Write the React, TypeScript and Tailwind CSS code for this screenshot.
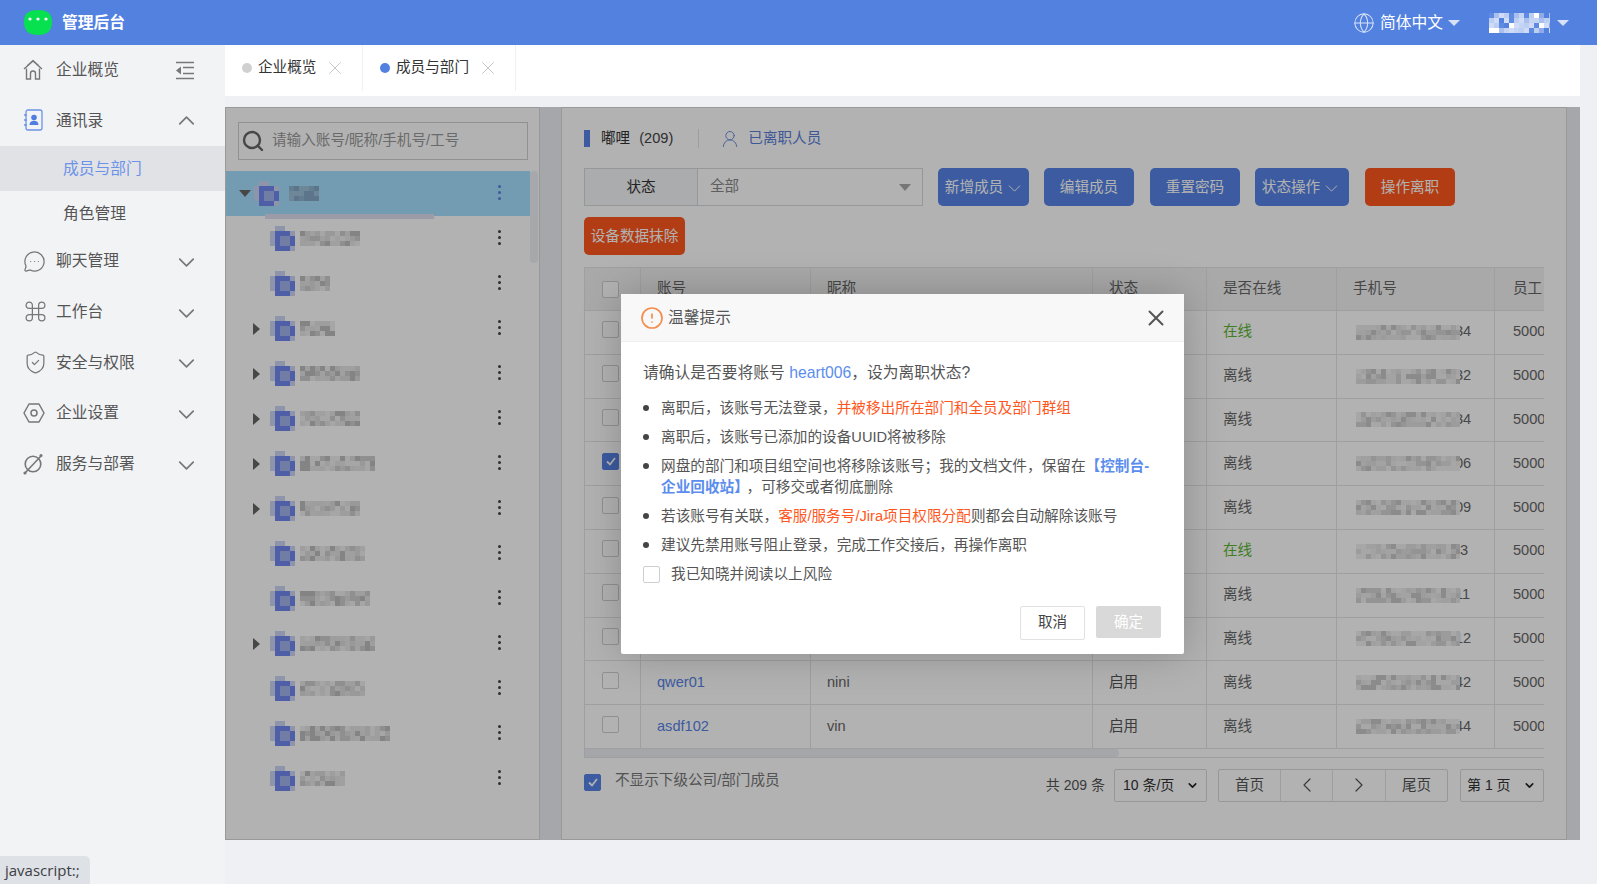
import { ChevronDown, ChevronUp, ChevronLeft, ChevronRight, CircleAlert, Command, Globe, MessageCircleMore, Search, ShieldCheck, UserRound, X } from 'lucide-react'

function rng(seed: number) {
  let s = seed * 9301 + 49297
  return () => {
    s = (s * 9301 + 49297) % 233280
    return s / 233280
  }
}

const grays = ['#e6e6e6', '#dcdcdc', '#cdcdcd', '#e2e2e2', '#eeeeee', '#bdbdbd']
const phoneGrays = ['#eaeaea', '#e0e0e0', '#d4d4d4', '#e6e6e6', '#f0f0f0', '#c8c8c8']
const lights = ['#a9c0ef', '#d0dcf7', '#ffffff', '#bccff3', '#5f8be2', '#5281e0', '#8faae8', '#c4d4f5']

function Mosaic({ w, h = 15, seed, colors = grays }: { w: number; h?: number; seed: number; colors?: string[] }) {
  const r = rng(seed)
  const cells = []
  for (let y = 0; y < h; y += 5) {
    for (let x = 0; x < w; x += 5) {
      cells.push(<rect key={`${x}-${y}`} x={x} y={y} width={5} height={5} fill={colors[Math.floor(r() * colors.length)]} />)
    }
  }
  return (
    <svg width={w} height={h} shapeRendering="crispEdges" className="relative z-10 shrink-0">
      {cells}
    </svg>
  )
}

function Avatar() {
  const B = '#7089f0'
  const G = '#a4b4ee'
  const L = '#ccd4f2'
  const grid = [
    [null, L, L, null, null],
    [L, B, B, B, L],
    [L, B, G, G, B],
    [L, B, G, G, B],
    [null, B, B, B, L],
  ]
  return (
    <svg width={25} height={25} shapeRendering="crispEdges" className="shrink-0">
      {grid.map((row, y) => row.map((c, x) => c && <rect key={`${x}-${y}`} x={x * 5} y={y * 5} width={5} height={5} fill={c} />))}
    </svg>
  )
}

function HomeIcon() {
  return (
    <svg width={20} height={22} viewBox="0 0 20 22" fill="none" stroke="#777" strokeWidth={1.4}>
      <path d="M1 10 10 2l9 8" />
      <path d="M3.5 9.5V20h4v-5.5a2.5 2.5 0 0 1 5 0V20h4V9.5" />
      <path d="M4 6.5 10 1l6 5.5" strokeWidth={0.8} />
    </svg>
  )
}

function BookIcon() {
  return (
    <svg width={20} height={22} viewBox="0 0 20 22" fill="none">
      <rect x={3} y={1} width={16} height={20} rx={2} stroke="#6d93e8" strokeWidth={1.3} />
      <path d="M1 6h3M1 11h3M1 16h3" stroke="#6d93e8" strokeWidth={1.3} />
      <circle cx={11} cy={8.5} r={2.8} fill="#4f7de0" />
      <path d="M6.5 16c0-3 2-4.2 4.5-4.2s4.5 1.2 4.5 4.2z" fill="#4f7de0" />
    </svg>
  )
}

function HexIcon() {
  return (
    <svg width={22} height={22} viewBox="0 0 22 22" fill="none" stroke="#777" strokeWidth={1.5}>
      <path d="M6 2h10l5 9-5 9H6l-5-9z" strokeLinejoin="round" />
      <circle cx={11} cy={11} r={3} />
    </svg>
  )
}

function PlanetIcon() {
  return (
    <svg width={20} height={22} viewBox="0 0 20 22" fill="none" stroke="#777" strokeWidth={1.6}>
      <circle cx={10} cy={11} r={7.8} />
      <path d="M2 20 18 3" />
      <circle cx={2} cy={20} r={0.8} />
      <circle cx={18} cy={2.5} r={0.8} />
    </svg>
  )
}

function CollapseIcon() {
  return (
    <svg width={20} height={19} viewBox="0 0 20 19" fill="none" stroke="#777" strokeWidth={1.4} className="ml-auto mr-[30px]">
      <path d="M1 1.5h18M8 6.5h11M8 12.5h11M1 17.5h18" />
      <path d="M6 5.5v8L1 9.5z" fill="#777" stroke="none" />
    </svg>
  )
}

function NavItem({ icon, label, chevron }: { icon: React.ReactNode; label: string; chevron?: 'up' | 'down' }) {
  return (
    <div className="flex h-[50.7px] items-center text-[15.75px] text-[#555]">
      <div className="ml-[23px] flex w-[33px] shrink-0 items-center">{icon}</div>
      <span>{label}</span>
      {chevron === 'up' && <ChevronUp size={27} strokeWidth={1.5} className="ml-auto mr-[25px] text-[#777]" />}
      {chevron === 'down' && <ChevronDown size={27} strokeWidth={1.5} className="ml-auto mr-[25px] mt-[3px] text-[#777]" />}
    </div>
  )
}

function Sidebar() {
  return (
    <aside className="w-[225px] shrink-0 bg-[#f2f3f5]">
      <div className="flex h-[50px] items-center text-[15.75px] text-[#555]">
        <div className="ml-[23px] flex w-[33px] shrink-0 items-center">
          <HomeIcon />
        </div>
        <span>企业概览</span>
        <CollapseIcon />
      </div>
      <NavItem icon={<BookIcon />} label="通讯录" chevron="up" />
      <div className="flex h-[45px] items-center bg-[#e1e2e6] pl-[63px] pt-[2px] text-[15.75px] text-[#6d93e8]">成员与部门</div>
      <div className="flex h-[45px] items-center pl-[63px] pt-[2px] text-[15.75px] text-[#555]">角色管理</div>
      <NavItem icon={<MessageCircleMore size={23} strokeWidth={1.3} color="#777" />} label="聊天管理" chevron="down" />
      <NavItem icon={<Command size={25} strokeWidth={1.2} color="#777" />} label="工作台" chevron="down" />
      <NavItem icon={<ShieldCheck size={25} strokeWidth={1.2} color="#777" />} label="安全与权限" chevron="down" />
      <NavItem icon={<HexIcon />} label="企业设置" chevron="down" />
      <NavItem icon={<PlanetIcon />} label="服务与部署" chevron="down" />
    </aside>
  )
}

function Tab({ label, dot, width }: { label: string; dot: string; width: string }) {
  return (
    <div className={`flex h-[46px] items-center border-r border-[#f0f0f0] pl-[17px] text-[14.6px] text-[#333] ${width}`}>
      <span className={`mr-[6px] h-[10px] w-[10px] rounded-full ${dot}`} />
      <span>{label}</span>
      <X size={22} strokeWidth={0.9} className="ml-[8px] text-[#bbbbbb]" />
    </div>
  )
}

const treeRows = [
  { w: 30, arrow: 'down', seed: 3 },
  { w: 60, seed: 11 },
  { w: 30, seed: 17 },
  { w: 35, arrow: 'right', seed: 23 },
  { w: 60, arrow: 'right', seed: 29 },
  { w: 60, arrow: 'right', seed: 31 },
  { w: 75, arrow: 'right', seed: 37 },
  { w: 60, arrow: 'right', seed: 41 },
  { w: 65, seed: 43 },
  { w: 70, seed: 47 },
  { w: 75, arrow: 'right', seed: 53 },
  { w: 65, seed: 59 },
  { w: 90, seed: 61 },
  { w: 45, seed: 67 },
]

function TreePanel() {
  return (
    <section className="relative isolate h-full w-[315px] shrink-0 border border-[#dcdcdc] bg-white">
      <div className="pl-[12px] pr-[11px] pt-[14px]">
        <div className="flex h-[38px] items-center border border-[#d0d0d0] pl-[2px] text-[14.6px] text-[#999]">
          <Search size={24} strokeWidth={2.4} className="mr-[7px] text-[#666]" />
          请输入账号/昵称/手机号/工号
        </div>
      </div>
      <div className="mt-[11px] w-[304px]">
        {treeRows.map((row, i) => (
          <div key={row.seed} className={`relative flex h-[45px] items-center ${i === 0 ? 'bg-[#a5deff]' : ''}`}>
            <div className={`flex shrink-0 items-center ${i === 0 ? 'w-[28px] pl-[13px]' : 'w-[44px] pl-[27px]'}`}>
              {row.arrow === 'right' && <span className="h-0 w-0 border-y-[6px] border-l-[7px] border-y-transparent border-l-[#666]" />}
              {row.arrow === 'down' && <span className="h-0 w-0 border-x-[6px] border-t-[7px] border-x-transparent border-t-[#666]" />}
            </div>
            <Avatar />
            <div className={i === 0 ? 'ml-[10px]' : 'ml-[5px]'}>
              <Mosaic w={row.w} seed={row.seed} colors={i === 0 ? ['#8fb4d0', '#9cc0da', '#86a8c6'] : grays} />
            </div>
            <div className="absolute left-[272px] top-[14px] flex flex-col gap-[3px]">
              <span className={`h-[3px] w-[3px] rounded-full ${i === 0 ? 'bg-[#5c7fe0]' : 'bg-[#444]'}`} />
              <span className={`h-[3px] w-[3px] rounded-full ${i === 0 ? 'bg-[#5c7fe0]' : 'bg-[#444]'}`} />
              <span className={`h-[3px] w-[3px] rounded-full ${i === 0 ? 'bg-[#5c7fe0]' : 'bg-[#444]'}`} />
            </div>
            {i === 0 && <span className="absolute left-[39px] top-[43px] h-[5px] w-[169px] bg-[#dfe0f0]" />}
          </div>
        ))}
      </div>
      <span className="absolute left-[304px] top-[63px] h-[92px] w-[8px] rounded-full bg-[#f0f1f5]" />
    </section>
  )
}

function ActionButton({ label, menu, danger, className }: { label: string; menu?: boolean; danger?: boolean; className: string }) {
  return (
    <button className={`flex h-[38px] items-center justify-center rounded-[5px] pt-[2px] text-[14.6px] text-white ${danger ? 'bg-[#ff571d]' : 'bg-[#5683e6]'} ${className}`}>
      {label}
      {menu && <ChevronDown size={21} strokeWidth={1.1} className="ml-[1px]" />}
    </button>
  )
}

const tableRows = [
  { online: '在线', tail: '34', seed: 71 },
  { online: '离线', tail: '32', seed: 73 },
  { online: '离线', tail: '34', seed: 79 },
  { online: '离线', tail: '06', seed: 83, checked: true },
  { online: '离线', tail: '09', seed: 89 },
  { online: '在线', tail: '3', seed: 97 },
  { online: '离线', tail: '11', seed: 101 },
  { online: '离线', tail: '12', seed: 103 },
  { online: '离线', tail: '42', seed: 107, account: 'qwer01', nick: 'nini', state: '启用' },
  { online: '离线', tail: '44', seed: 109, account: 'asdf102', nick: 'vin', state: '启用' },
]

function CheckBox({ checked, className }: { checked?: boolean; className?: string }) {
  return (
    <span className={`flex h-[17px] w-[17px] items-center justify-center rounded-[2px] border ${checked ? 'border-[#5683e6] bg-[#5683e6]' : 'border-[#cfcfcf] bg-white'} ${className ?? ''}`}>
      {checked && (
        <svg width={12} height={12} viewBox="0 0 12 12" fill="none" stroke="#fff" strokeWidth={1.8}>
          <path d="M2 6.5 5 9.5 10 3" />
        </svg>
      )}
    </span>
  )
}

function Table() {
  const grid = 'grid grid-cols-[56px_170px_282px_114px_130px_158px_50px]'
  const cell = 'flex items-center overflow-hidden whitespace-nowrap border-r border-[#e4e4e4]'
  return (
    <div className="mt-[12px] w-[960px] overflow-hidden border-l border-t border-[#e4e4e4] text-[14.6px] text-[#666]">
      <div className={`${grid} h-[43px] border-b border-[#e4e4e4] bg-[#f2f2f2]`}>
        <div className={`${cell} pl-[17px]`}>
          <CheckBox />
        </div>
        <div className={`${cell} pl-[16px]`}>账号</div>
        <div className={`${cell} pl-[16px]`}>昵称</div>
        <div className={`${cell} pl-[16px]`}>状态</div>
        <div className={`${cell} pl-[16px]`}>是否在线</div>
        <div className={`${cell} pl-[16px]`}>手机号</div>
        <div className="flex items-center overflow-hidden whitespace-nowrap pl-[18px]">员工</div>
      </div>
      {tableRows.map(row => (
        <div key={row.seed} className={`${grid} h-[43.8px] border-b border-[#e4e4e4]`}>
          <div className={`${cell} pl-[17px]`}>
            <CheckBox checked={row.checked} className="mb-[5px]" />
          </div>
          <div className={`${cell} pl-[16px] text-[#5683e6]`}>{row.account}</div>
          <div className={`${cell} pl-[16px]`}>{row.nick}</div>
          <div className={`${cell} pl-[16px] text-[#555]`}>{row.state}</div>
          <div className={`${cell} pl-[16px] ${row.online === '在线' ? 'text-[#5cb531]' : ''}`}>{row.online}</div>
          <div className={`${cell} pl-[19px]`}>
            <Mosaic w={104} seed={row.seed} colors={phoneGrays} />
            <span className={row.tail.length > 1 ? '-ml-[5px]' : ''}>{row.tail}</span>
          </div>
          <div className="flex items-center overflow-hidden whitespace-nowrap pl-[18px]">5000</div>
        </div>
      ))}
      <div className="h-[9px] border-b border-[#e4e4e4]">
        <div className="h-full w-[534px] rounded-r-[4px] bg-[#eceef2]" />
      </div>
    </div>
  )
}

function PageSelect({ label, className }: { label: string; className: string }) {
  return (
    <div className={`flex h-[33px] items-center justify-between whitespace-nowrap rounded-[2px] border border-[#d9d9d9] pr-[7px] text-[14px] text-[#333] ${className}`}>
      {label}
      <ChevronDown size={13} strokeWidth={3} className="shrink-0 text-[#222]" />
    </div>
  )
}

function MembersPanel() {
  return (
    <section className="isolate h-full w-[1006px] shrink-0 border border-[#dcdcdc] bg-white pl-[22px]">
      <div className="mt-[22px] flex h-[17px] items-center text-[14.6px]">
        <span className="h-[17px] w-[6px] bg-[#5683e6]" />
        <span className="ml-[11px] text-[#333]">嘟哩</span>
        <span className="ml-[9px] text-[#444]">(209)</span>
        <span className="ml-[25px] h-[19px] w-px bg-[#e2e2e2]" />
        <UserRound size={20} strokeWidth={1.2} className="ml-[21px] text-[#7191dc]" />
        <span className="ml-[8px] text-[#5b80d8]">已离职人员</span>
      </div>
      <div className="mt-[21px] flex flex-wrap items-start">
        <div className="flex h-[38px] w-[339px] border border-[#d9d9d9] text-[14.6px]">
          <div className="flex w-[113px] items-center justify-center border-r border-[#d9d9d9] bg-[#f5f6f8] pt-[2px] text-[#333]">状态</div>
          <div className="flex flex-1 items-center justify-between pl-[12px] pr-[11px] text-[#888]">
            全部
            <span className="h-0 w-0 border-x-[6px] border-t-[7px] border-x-transparent border-t-[#aaa]" />
          </div>
        </div>
        <ActionButton label="新增成员" menu className="ml-[15px] w-[91px] pl-[3px]" />
        <ActionButton label="编辑成员" className="ml-[15px] w-[90px]" />
        <ActionButton label="重置密码" className="ml-[16px] w-[90px]" />
        <ActionButton label="状态操作" menu className="ml-[15px] w-[94px]" />
        <ActionButton label="操作离职" danger className="ml-[16px] w-[90px]" />
      </div>
      <ActionButton label="设备数据抹除" danger className="mt-[11px] w-[101px]" />
      <Table />
      <div className="mt-[11px] flex w-[960px] items-start text-[14.6px] text-[#777]">
        <div className="mt-[4px] flex items-center">
          <CheckBox checked />
          <span className="ml-[14px] -mt-[3px]">不显示下级公司/部门成员</span>
        </div>
        <div className="ml-auto flex items-center text-[#555]">
          <span className="mr-[9px] mt-[1px] text-[14px]">共 209 条</span>
          <PageSelect label="10 条/页" className="w-[93px] pl-[8px]" />
          <div className="ml-[11px] flex h-[33px] w-[230px] items-center rounded-[2px] border border-[#d9d9d9]">
            <span className="flex h-full w-[62px] items-center justify-center border-r border-[#e2e2e2]">首页</span>
            <span className="flex h-full w-[52px] items-center justify-center border-r border-[#e2e2e2]">
              <ChevronLeft size={24} strokeWidth={1.2} />
            </span>
            <span className="flex h-full w-[53px] items-center justify-center border-r border-[#e2e2e2]">
              <ChevronRight size={24} strokeWidth={1.2} />
            </span>
            <span className="flex h-full flex-1 items-center justify-center">尾页</span>
          </div>
          <PageSelect label="第 1 页" className="ml-[12px] w-[84px] pl-[6px]" />
        </div>
      </div>
    </section>
  )
}

function Bullet({ children }: { children: React.ReactNode }) {
  return (
    <li className="mb-[8px] flex text-[14.65px] leading-[21px] text-[#555]">
      <span className="mr-[12px] mt-[7px] h-[6px] w-[6px] shrink-0 rounded-full bg-[#444]" />
      <div>{children}</div>
    </li>
  )
}

function Modal() {
  return (
    <div className="h-[360px] w-[563px] rounded-[2px] bg-white shadow-[0_0_40px_rgba(0,0,0,0.22)]">
      <div className="flex h-[48px] items-center border-b border-[#eeeeee] bg-[#f8f8f8] pl-[19px] pr-[15px] pt-[1px]">
        <CircleAlert size={24} strokeWidth={1.7} className="text-[#f58d4e]" />
        <span className="ml-[4px] text-[15.75px] text-[#555]">温馨提示</span>
        <X size={26} strokeWidth={1.8} className="ml-auto mt-[1px] text-[#555]" />
      </div>
      <div className="px-[22px] pt-[19px]">
        <p className="h-[24px] text-[15.75px] leading-[24px] text-[#555]">
          请确认是否要将账号 <span className="text-[#5b8dee]">heart006</span>，设为离职状态?
        </p>
        <ul className="mt-[13px] w-[520px]">
          <Bullet>
            离职后，该账号无法登录，<span className="text-[#ff5722]">并被移出所在部门和全员及部门群组</span>
          </Bullet>
          <Bullet>离职后，该账号已添加的设备UUID将被移除</Bullet>
          <Bullet>
            网盘的部门和项目组空间也将移除该账号；我的文档文件，保留在<span className="font-bold text-[#5b8dee]">【控制台-</span>
            <br />
            <span className="font-bold text-[#5b8dee]">企业回收站】</span>
            <span className="ml-[5px]">，可移交或者彻底删除</span>
          </Bullet>
          <Bullet>
            若该账号有关联，<span className="text-[#ff5722]">客服/服务号/Jira项目权限分配</span>则都会自动解除该账号
          </Bullet>
          <Bullet>建议先禁用账号阻止登录，完成工作交接后，再操作离职</Bullet>
        </ul>
        <div className="mt-[8px] flex items-center text-[14.65px] text-[#555]">
          <CheckBox />
          <span className="ml-[11px]">我已知晓并阅读以上风险</span>
        </div>
        <div className="mt-[21px] flex items-start justify-end pr-[1px]">
          <button className="h-[34px] w-[65px] rounded-[2px] border border-[#e2e2e2] bg-white pb-[2px] text-[14.6px] text-[#444]">取消</button>
          <button className="ml-[11px] h-[32px] w-[65px] rounded-[2px] bg-[#d9d9d9] text-[14.6px] text-white">确定</button>
        </div>
      </div>
    </div>
  )
}

export default function App() {
  return (
    <div className="relative flex h-screen w-full flex-col overflow-hidden bg-[#eef0f4] [font-family:'Liberation_Sans','Noto_Sans_CJK_SC',sans-serif]">
      <header className="flex h-[45px] shrink-0 items-center bg-[#5281e0] text-white">
        <svg width={28} height={25} viewBox="0 0 28 25" className="ml-[24px]">
          <path d="M14 0c9 0 14 3 14 12s-5 13-14 13S0 21 0 12 5 0 14 0z" fill="#07e04f" />
          <circle cx={6} cy={9} r={1.6} fill="#fff" />
          <circle cx={14} cy={9} r={1.6} fill="#fff" />
          <circle cx={22} cy={9} r={1.6} fill="#fff" />
        </svg>
        <span className="ml-[10px] text-[15.75px] font-bold">管理后台</span>
        <Globe size={22} strokeWidth={1.1} className="ml-auto text-[#dbe5fa]" />
        <span className="ml-[5px] text-[15.75px]">简体中文</span>
        <span className="ml-[5px] h-0 w-0 border-x-[6px] border-t-[6px] border-x-transparent border-t-[#d7e1f8]" />
        <div className="ml-[29px] flex">
          <Mosaic w={61} h={20} seed={7} colors={lights} />
        </div>
        <span className="ml-[7px] mr-[28px] h-0 w-0 border-x-[6px] border-t-[6px] border-x-transparent border-t-[#d7e1f8]" />
      </header>
      <div className="flex min-h-0 flex-1">
        <Sidebar />
        <main className="flex min-w-0 flex-1 flex-col pr-[17px]">
          <div className="flex h-[51px] shrink-0 items-start bg-white">
            <Tab label="企业概览" dot="bg-[#d0d0d0]" width="w-[138px]" />
            <Tab label="成员与部门" dot="bg-[#5281e0]" width="w-[153px]" />
          </div>
          <div className="relative mt-[11px] flex h-[733px] shrink-0">
            <TreePanel />
            <div className="w-[21px] shrink-0" />
            <MembersPanel />
            <div className="absolute inset-0 z-20 flex items-center justify-center bg-black/30">
              <Modal />
            </div>
          </div>
        </main>
      </div>
      <div className="absolute bottom-0 left-0 flex h-[28px] w-[90px] items-center rounded-tr-[5px] bg-[#dee1e6] pl-[5px] text-[15px] text-[#3c4043] [font-family:'Open_Sans',sans-serif]">
        javascript:;
      </div>
    </div>
  )
}
